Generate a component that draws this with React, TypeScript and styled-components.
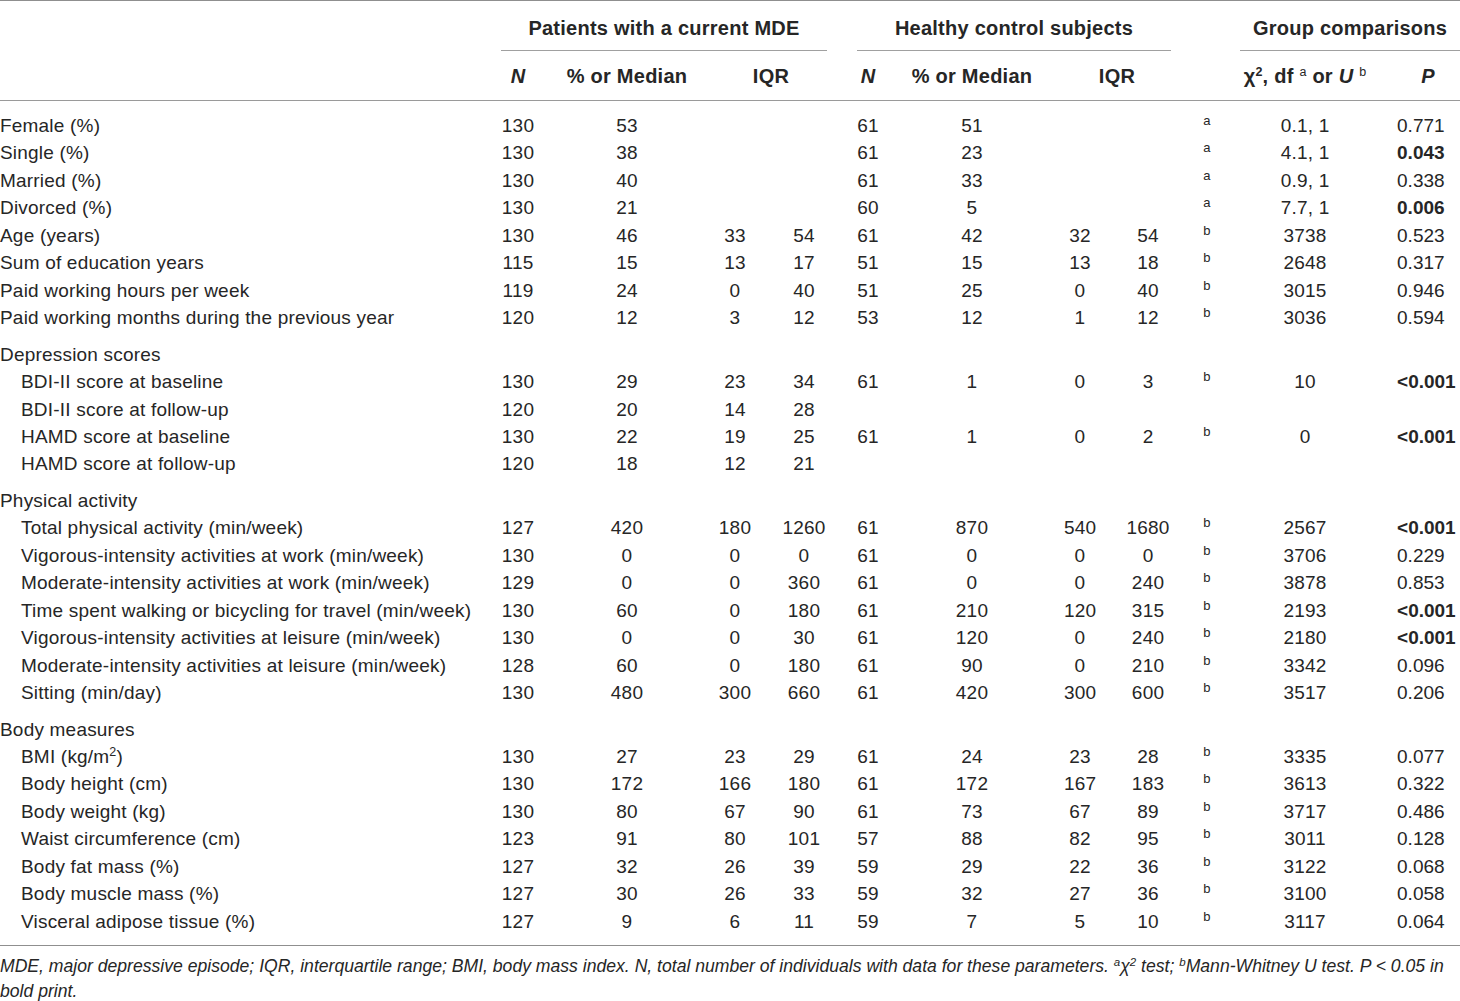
import React from "react";
import styled, { createGlobalStyle, css } from "styled-components";

const Global = createGlobalStyle`
  html, body { margin: 0; padding: 0; background: #ffffff; }
  body { font-family: "Liberation Sans", Arial, Helvetica, sans-serif; color: #222; }
`;

const Page = styled.div`
  width: 1460px;
`;

const Table = styled.table`
  width: 1460px;
  table-layout: fixed;
  border-collapse: collapse;
  border-top: 1.5px solid #8f8f8f;
  border-bottom: 1.5px solid #8f8f8f;
  font-size: 19px;
  letter-spacing: 0.2px;
  color: #262626;
`;

const HeadRow = styled.tr<{ $bottom?: boolean }>`
  ${(p) =>
    p.$bottom &&
    css`
      border-bottom: 1.5px solid #9a9a9a;
    `}
`;

const GroupCell = styled.th<{ $pl?: number; $pr?: number }>`
  padding: 0 ${(p) => p.$pr ?? 0}px 0 ${(p) => p.$pl ?? 0}px;
  font-weight: 700;
  font-size: 20px;
  letter-spacing: 0.25px;
  vertical-align: top;
`;

const GroupTitle = styled.div`
  padding: 14px 0 9px;
  line-height: 26px;
  text-align: center;
  border-bottom: 1.5px solid #a0a0a0;
  white-space: nowrap;
`;

const ColHead = styled.th<{ $pr?: number }>`
  padding: 12px ${(p) => p.$pr ?? 0}px 11px 0;
  line-height: 26px;
  font-weight: 700;
  font-size: 20px;
  letter-spacing: 0.25px;
  text-align: center;
  white-space: nowrap;
`;

const Sup = styled.sup`
  font-size: 12.5px;
  font-weight: 400;
  vertical-align: 7px;
  line-height: 0;
`;

const Body = styled.tbody`
  tr:first-child td {
    padding-top: 11px;
  }
  tr:last-child td {
    padding-bottom: 10px;
  }
`;

const Label = styled.td<{ $indent?: boolean }>`
  padding: 0 0 0 ${(p) => (p.$indent ? 21 : 0)}px;
  height: 27.45px;
  line-height: 27.45px;
  white-space: nowrap;
  text-align: left;
`;

const Section = styled.td`
  padding: 9px 0 0 0;
  line-height: 27.45px;
  text-align: left;
`;

const Num = styled.td`
  padding: 0;
  line-height: 27.45px;
  text-align: center;
  white-space: nowrap;
`;

const Mark = styled.td`
  padding: 0;
  font-size: 13px;
  line-height: 18px;
  vertical-align: top;
  text-align: center;
`;

const PVal = styled.td<{ $bold?: boolean }>`
  padding: 0 0 0 1px;
  line-height: 27.45px;
  text-align: left;
  white-space: nowrap;
  letter-spacing: 0;
  font-weight: ${(p) => (p.$bold ? 700 : 400)};
`;

const Footer = styled.div`
  padding-top: 8px;
  font-style: italic;
  font-size: 17.6px;
  line-height: 25px;
  letter-spacing: 0;
  color: #262626;
`;

const FootLine = styled.div`
  white-space: nowrap;
`;

const FootSup = styled.sup`
  font-size: 11.5px;
  vertical-align: 6px;
  line-height: 0;
`;

type Row = {
  label: string;
  indent?: boolean;
  v?: (string | number)[];
  mark?: string;
  stat?: string;
  p?: string;
  bold?: boolean;
  section?: boolean;
  sup?: string;
};

const rows: Row[] = [
  { label: "Female (%)", v: [130, 53, "", "", 61, 51, "", ""], mark: "a", stat: "0.1, 1", p: "0.771" },
  { label: "Single (%)", v: [130, 38, "", "", 61, 23, "", ""], mark: "a", stat: "4.1, 1", p: "0.043", bold: true },
  { label: "Married (%)", v: [130, 40, "", "", 61, 33, "", ""], mark: "a", stat: "0.9, 1", p: "0.338" },
  { label: "Divorced (%)", v: [130, 21, "", "", 60, 5, "", ""], mark: "a", stat: "7.7, 1", p: "0.006", bold: true },
  { label: "Age (years)", v: [130, 46, 33, 54, 61, 42, 32, 54], mark: "b", stat: "3738", p: "0.523" },
  { label: "Sum of education years", v: [115, 15, 13, 17, 51, 15, 13, 18], mark: "b", stat: "2648", p: "0.317" },
  { label: "Paid working hours per week", v: [119, 24, 0, 40, 51, 25, 0, 40], mark: "b", stat: "3015", p: "0.946" },
  { label: "Paid working months during the previous year", v: [120, 12, 3, 12, 53, 12, 1, 12], mark: "b", stat: "3036", p: "0.594" },
  { label: "Depression scores", section: true },
  { label: "BDI-II score at baseline", indent: true, v: [130, 29, 23, 34, 61, 1, 0, 3], mark: "b", stat: "10", p: "<0.001", bold: true },
  { label: "BDI-II score at follow-up", indent: true, v: [120, 20, 14, 28, "", "", "", ""] },
  { label: "HAMD score at baseline", indent: true, v: [130, 22, 19, 25, 61, 1, 0, 2], mark: "b", stat: "0", p: "<0.001", bold: true },
  { label: "HAMD score at follow-up", indent: true, v: [120, 18, 12, 21, "", "", "", ""] },
  { label: "Physical activity", section: true },
  { label: "Total physical activity (min/week)", indent: true, v: [127, 420, 180, 1260, 61, 870, 540, 1680], mark: "b", stat: "2567", p: "<0.001", bold: true },
  { label: "Vigorous-intensity activities at work (min/week)", indent: true, v: [130, 0, 0, 0, 61, 0, 0, 0], mark: "b", stat: "3706", p: "0.229" },
  { label: "Moderate-intensity activities at work (min/week)", indent: true, v: [129, 0, 0, 360, 61, 0, 0, 240], mark: "b", stat: "3878", p: "0.853" },
  { label: "Time spent walking or bicycling for travel (min/week)", indent: true, v: [130, 60, 0, 180, 61, 210, 120, 315], mark: "b", stat: "2193", p: "<0.001", bold: true },
  { label: "Vigorous-intensity activities at leisure (min/week)", indent: true, v: [130, 0, 0, 30, 61, 120, 0, 240], mark: "b", stat: "2180", p: "<0.001", bold: true },
  { label: "Moderate-intensity activities at leisure (min/week)", indent: true, v: [128, 60, 0, 180, 61, 90, 0, 210], mark: "b", stat: "3342", p: "0.096" },
  { label: "Sitting (min/day)", indent: true, v: [130, 480, 300, 660, 61, 420, 300, 600], mark: "b", stat: "3517", p: "0.206" },
  { label: "Body measures", section: true },
  { label: "BMI (kg/m", sup: "2", indent: true, v: [130, 27, 23, 29, 61, 24, 23, 28], mark: "b", stat: "3335", p: "0.077" },
  { label: "Body height (cm)", indent: true, v: [130, 172, 166, 180, 61, 172, 167, 183], mark: "b", stat: "3613", p: "0.322" },
  { label: "Body weight (kg)", indent: true, v: [130, 80, 67, 90, 61, 73, 67, 89], mark: "b", stat: "3717", p: "0.486" },
  { label: "Waist circumference (cm)", indent: true, v: [123, 91, 80, 101, 57, 88, 82, 95], mark: "b", stat: "3011", p: "0.128" },
  { label: "Body fat mass (%)", indent: true, v: [127, 32, 26, 39, 59, 29, 22, 36], mark: "b", stat: "3122", p: "0.068" },
  { label: "Body muscle mass (%)", indent: true, v: [127, 30, 26, 33, 59, 32, 27, 36], mark: "b", stat: "3100", p: "0.058" },
  { label: "Visceral adipose tissue (%)", indent: true, v: [127, 9, 6, 11, 59, 7, 5, 10], mark: "b", stat: "3117", p: "0.064" },
];

const widths = [500, 36, 182, 34, 104, 24, 184, 32, 104, 14, 182, 64];

export default function App() {
  return (
    <Page>
      <Global />
      <Table>
        <colgroup>
          {widths.map((w, i) => (
            <col key={i} style={{ width: w }} />
          ))}
        </colgroup>
        <thead>
          <HeadRow>
            <GroupCell />
            <GroupCell colSpan={4} $pl={1} $pr={29}>
              <GroupTitle>Patients with a current MDE</GroupTitle>
            </GroupCell>
            <GroupCell colSpan={4} $pl={1} $pr={29}>
              <GroupTitle>Healthy control subjects</GroupTitle>
            </GroupCell>
            <GroupCell colSpan={3} $pl={40}>
              <GroupTitle>Group comparisons</GroupTitle>
            </GroupCell>
          </HeadRow>
          <HeadRow $bottom>
            <ColHead />
            <ColHead>
              <i>N</i>
            </ColHead>
            <ColHead>% or Median</ColHead>
            <ColHead colSpan={2} $pr={32}>
              IQR
            </ColHead>
            <ColHead>
              <i>N</i>
            </ColHead>
            <ColHead>% or Median</ColHead>
            <ColHead colSpan={2} $pr={30}>
              IQR
            </ColHead>
            <ColHead />
            <ColHead>
              χ<Sup style={{ fontWeight: 700 }}>2</Sup>, df <Sup>a</Sup> or <i>U</i> <Sup>b</Sup>
            </ColHead>
            <ColHead>
              <i>P</i>
            </ColHead>
          </HeadRow>
        </thead>
        <Body>
          {rows.map((r, i) =>
            r.section ? (
              <tr key={i}>
                <Section colSpan={12}>{r.label}</Section>
              </tr>
            ) : (
              <tr key={i}>
                <Label $indent={r.indent}>
                  {r.label}
                  {r.sup && (
                    <>
                      <Sup>{r.sup}</Sup>)
                    </>
                  )}
                </Label>
                {(r.v || []).map((x, j) => (
                  <Num key={j}>{x}</Num>
                ))}
                <Mark>{r.mark || ""}</Mark>
                <Num>{r.stat || ""}</Num>
                <PVal $bold={r.bold}>{r.p || ""}</PVal>
              </tr>
            )
          )}
        </Body>
      </Table>
      <Footer>
        <FootLine>
          MDE, major depressive episode; IQR, interquartile range; BMI, body mass index. N, total number of individuals
          with data for these parameters. <FootSup>a</FootSup>χ<FootSup>2</FootSup> test; <FootSup>b</FootSup>
          Mann-Whitney U test. P &lt; 0.05 in
        </FootLine>
        <FootLine>bold print.</FootLine>
      </Footer>
    </Page>
  );
}
